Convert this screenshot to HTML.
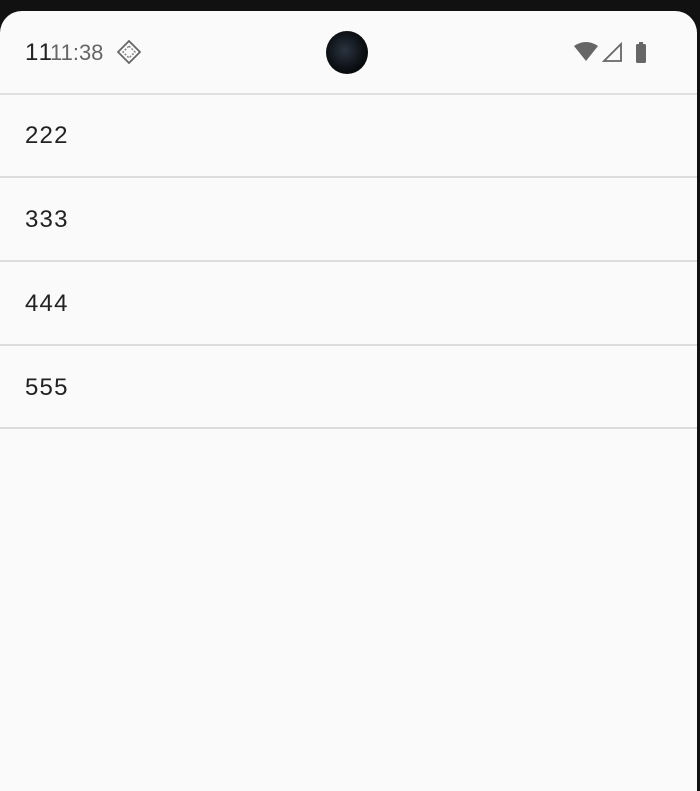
<!DOCTYPE html>
<html><head><style>
html,body{margin:0;padding:0;background:#111;width:700px;height:778px;overflow:hidden;font-family:"Liberation Sans",sans-serif}
.scr{position:absolute;left:0;top:11px;width:697px;height:780px;background:#fafafa;border-radius:22px 22px 0 0}
.t{position:absolute;font-size:24px;color:#222;letter-spacing:1.2px}
.row{position:absolute;left:0;width:697px;border-bottom:2px solid #dcdcdc}
</style></head><body>
<div class="scr">
<div style="position:absolute;left:0;top:0;width:697px;height:82px;border-bottom:2px solid #e0e0e0"></div>
<div class="t" style="left:25px;top:28px;font-size:24px;color:#222;letter-spacing:2px">11</div>
<div class="t" style="left:50px;top:29px;font-size:22px;color:#666;letter-spacing:0">11:38</div>
<svg style="position:absolute;left:117px;top:29px" width="24" height="24" viewBox="0 0 24 24"><path d="M12 1L23 12 12 23 1 12Z" fill="none" stroke="#666" stroke-width="1.8"/><path d="M12 6L18 12 12 18 6 12Z" fill="none" stroke="#888" stroke-width="1.5" stroke-dasharray="2 1.5"/></svg>
<div style="position:absolute;left:326px;top:20px;width:42px;height:43px;border-radius:50%;background:radial-gradient(circle at 45% 45%,#2a3440,#0b0e12 60%,#000)"></div>
<svg style="position:absolute;left:574px;top:30px" width="80" height="24" viewBox="0 0 80 24"><path d="M0 5Q12-3 24 5L12 20Z" fill="#666"/><path d="M47 3V20H30Z" fill="none" stroke="#666" stroke-width="1.8"/><rect x="62" y="3" width="10" height="19" rx="1.5" fill="#666"/><rect x="65" y="1" width="4" height="3" fill="#666"/></svg>
<div class="row" style="top:83px;height:82px"><div class="t" style="left:25px;top:28px">222</div></div>
<div class="row" style="top:167px;height:82px"><div class="t" style="left:25px;top:28px">333</div></div>
<div class="row" style="top:251px;height:82px"><div class="t" style="left:25px;top:28px">444</div></div>
<div class="row" style="top:335px;height:81px"><div class="t" style="left:25px;top:28px">555</div></div>
</div>
</body></html>
